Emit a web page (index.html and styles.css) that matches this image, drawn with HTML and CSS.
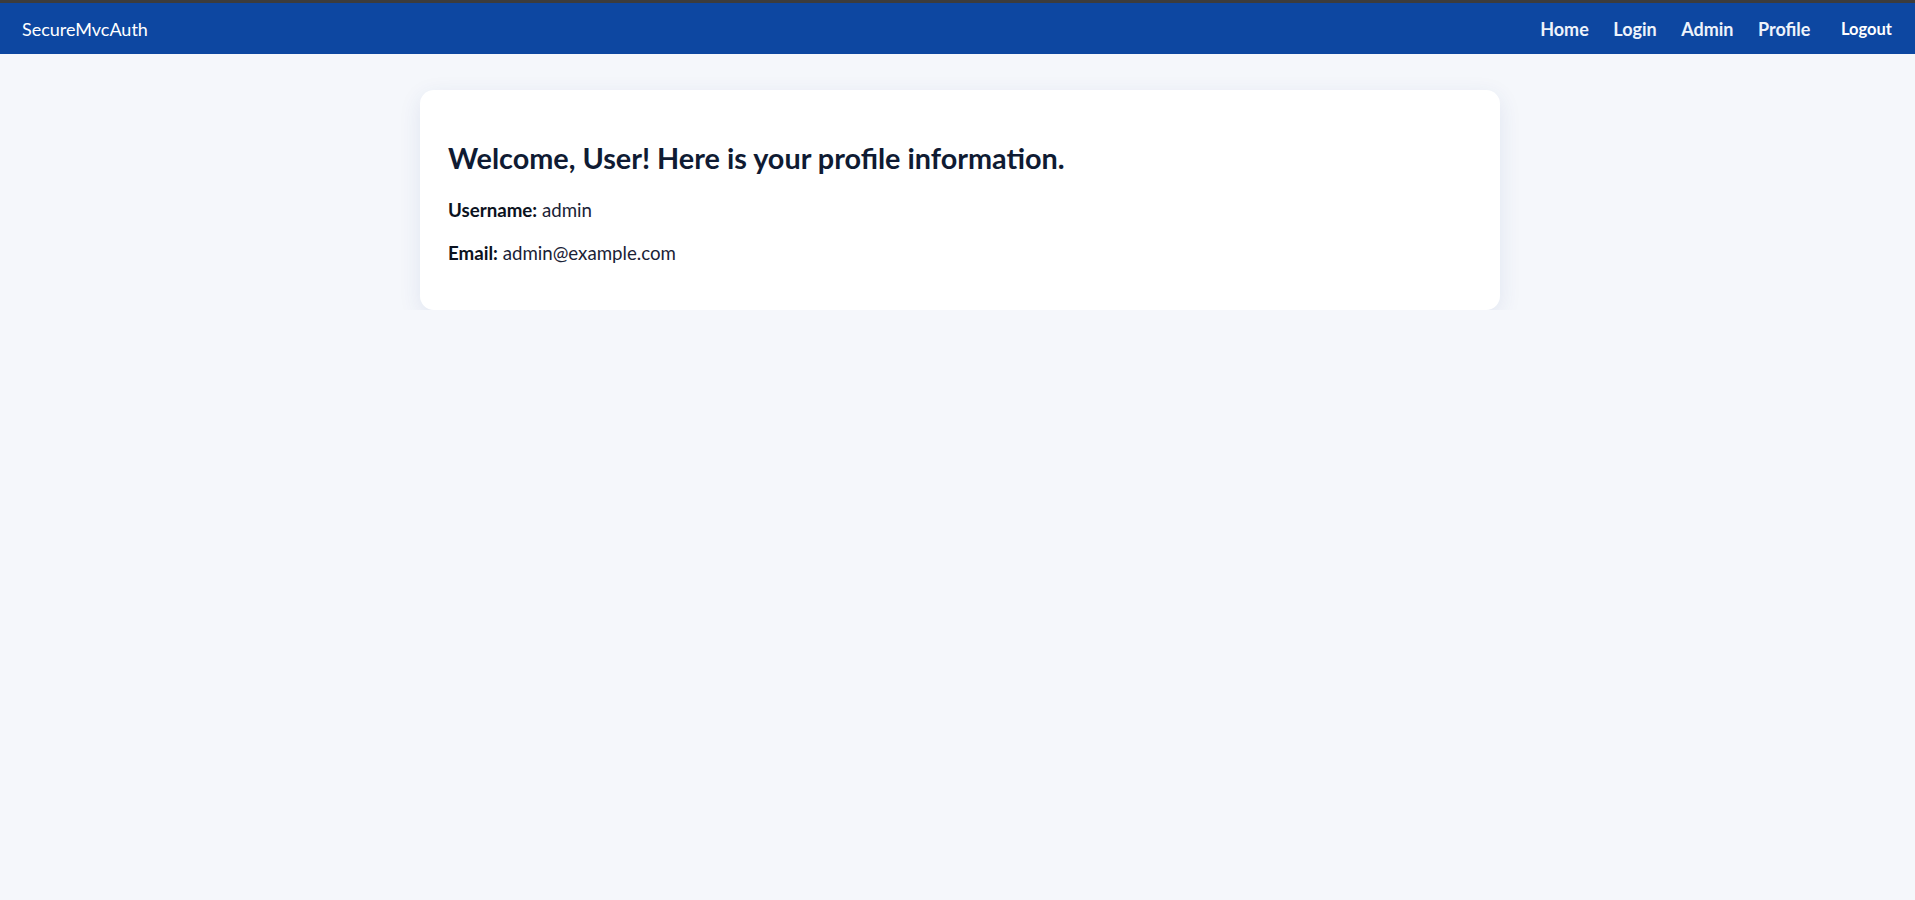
FILE: index.html
```html
<!DOCTYPE html>
<html lang="en">
<head>
<meta charset="utf-8">
<title>Profile - SecureMvcAuth</title>
<link rel="stylesheet" href="styles.css">
</head>
<body>
<header class="topbar">
  <a class="brand" href="#">SecureMvcAuth</a>
  <nav class="nav">
    <a class="nav-link" href="#">Home</a>
    <a class="nav-link" href="#">Login</a>
    <a class="nav-link" href="#">Admin</a>
    <a class="nav-link" href="#">Profile</a>
    <button class="logout" type="button">Logout</button>
  </nav>
</header>
<main class="page">
  <section class="card">
    <h2 class="card-title">Welcome, User! Here is your profile information.</h2>
    <p class="field"><strong>Username:</strong> admin</p>
    <p class="field"><strong>Email:</strong> admin@example.com</p>
  </section>
</main>
</body>
</html>
```

FILE: styles.css
```css
* { box-sizing: border-box; }
html, body { margin: 0; padding: 0; }
body {
  background: #f5f7fb;
  font-family: Lato, "Open Sans", "Liberation Sans", sans-serif;
  color: #0f172a;
}
.topbar {
  border-top: 3px solid #3c3c3c;
  height: 54px;
  background: #0d47a1;
  display: flex;
  align-items: center;
  justify-content: space-between;
  padding: 0 23px 0 22px;
}
.brand {
  color: #ffffff;
  text-decoration: none;
  font-size: 18px;
  font-weight: 400;
}
.nav {
  display: flex;
  align-items: center;
  gap: 24.5px;
}
.nav-link {
  color: #eef3fb;
  text-decoration: none;
  font-size: 18px;
  font-weight: 700;
}
.logout {
  background: transparent;
  border: 0;
  padding: 0;
  margin-left: 6px;
  color: #ffffff;
  font-family: inherit;
  font-size: 16.5px;
  font-weight: 700;
}
.page {
  display: flex;
  justify-content: center;
  padding-top: 36px;
  padding-left: 5px;
}
.card {
  width: 1080px;
  background: #ffffff;
  border-radius: 14px;
  box-shadow: 0 6px 22px rgba(40, 70, 150, 0.10);
  padding: 28px 28px 45px;
}
.card-title {
  margin: 23px 0 22px;
  font-size: 28.8px;
  font-weight: 700;
  color: #0f1b33;
  line-height: 1.2;
}
.field {
  margin: 0 0 19px;
  font-size: 18.7px;
  line-height: 1.3;
  color: #1a2236;
}
.field:last-child { margin-bottom: 0; }
.field strong { color: #0b1220; }
```
